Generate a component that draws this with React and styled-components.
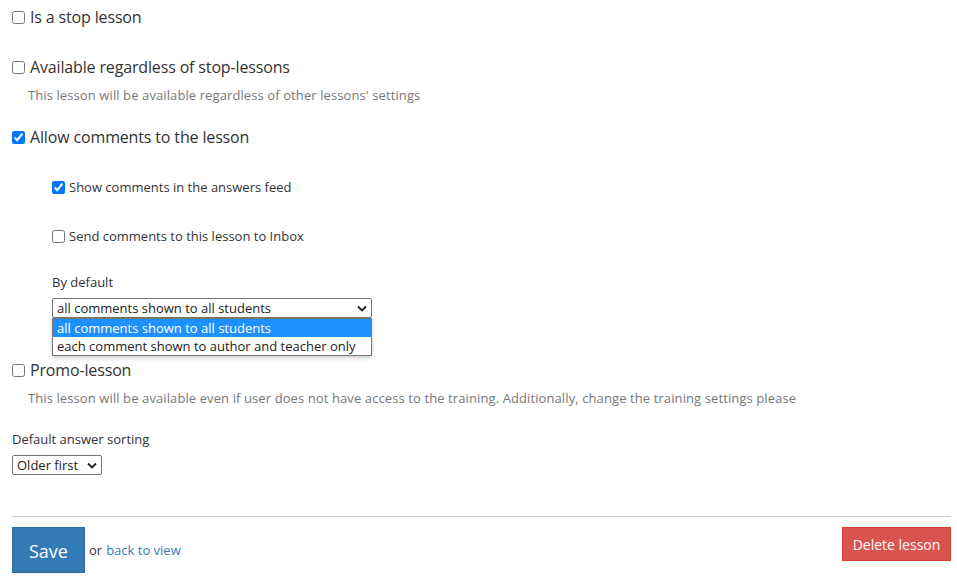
import React, { useState } from "react";
import styled, { createGlobalStyle } from "styled-components";

const Global = createGlobalStyle`
  body {
    margin: 0;
    background: #fff;
    font-family: "Open Sans", "Liberation Sans", Arial, sans-serif;
    color: #333;
  }
`

const Page = styled.form`
  padding: 0 6px 0 12px;
  width: 957px;
  box-sizing: border-box;
`
const Field = styled.div`
  padding-top: ${(p) => p.top || 0}px;
  padding-left: ${(p) => p.indent || 0}px;
`
const Check = styled.label`
  display: flex;
  align-items: center;
  font-size: ${(p) => (p.small ? "13px" : "16px")};
  color: #333;
  line-height: ${(p) => (p.small ? "18px" : "22px")};
  letter-spacing: ${(p) => (p.small ? "0" : "-0.15px")};
  input {
    width: 13px;
    height: 13px;
    margin: 0 ${(p) => (p.small ? "4px" : "5px")} 0 0;
    accent-color: #0075ff;
  }
`
const Hint = styled.div`
  font-size: 13px;
  color: #777;
  padding: 8px 0 0 16px;
  line-height: 18px;
  letter-spacing: 0.1px;
`
const Label = styled.div`
  font-size: 13px;
  color: #333;
  line-height: 18px;
  margin-bottom: 7px;
`
const SelectWrap = styled.div`
  position: relative;
  width: ${(p) => p.w}px;
`
const FakeSelect = styled.div`
  box-sizing: border-box;
  height: 20px;
  border: 1px solid #767676;
  border-radius: 2px;
  font-size: 13px;
  line-height: 18px;
  padding: 0 4px;
  display: flex;
  align-items: center;
  justify-content: space-between;
  color: #222;
  background: #fff;
  svg { flex: none; }
`
const DropList = styled.ul`
  position: absolute;
  left: 0;
  top: 20px;
  width: 100%;
  box-sizing: border-box;
  margin: 0;
  padding: 0;
  list-style: none;
  border: 1px solid #767676;
  background: #fff;
  box-shadow: 0 2px 4px rgba(0,0,0,.2);
  z-index: 5;
`
const Option = styled.li`
  font-size: 13px;
  line-height: 18px;
  padding: 0 4px;
  color: ${(p) => (p.active ? "#fff" : "#222")};
  background: ${(p) => (p.active ? "#1e90ff" : "#fff")};
`
const Rule = styled.hr`
  border: 0;
  border-top: 1px solid #ccc;
  margin: 41px 0 10px;
`
const Footer = styled.div`
  display: flex;
  justify-content: space-between;
  align-items: flex-start;
`
const Left = styled.div`
  display: flex;
  align-items: center;
  font-size: 13px;
  color: #333;
`
const SaveBtn = styled.button`
  background: #337ab7;
  border: 1px solid #2e6da4;
  color: #fff;
  font-family: inherit;
  font-size: 18px;
  width: 73px;
  height: 46px;
  margin-right: 4px;
  padding: 2px 0 0;
`
const Link = styled.a`
  color: #337ab7;
  text-decoration: none;
  margin-left: 4px;
`
const DeleteBtn = styled.button`
  background: #d9534f;
  border: 1px solid #d43f3a;
  color: #fff;
  font-family: inherit;
  font-size: 14px;
  width: 109px;
  height: 34px;
  padding: 0;
`

const Chevron = () => (
  <svg width="10" height="7" viewBox="0 0 10 7">
    <path d="M1 1.5l4 4 4-4" fill="none" stroke="#222" strokeWidth="1.8" />
  </svg>
)

export default function App() {
  const [opts] = useState([
    "all comments shown to all students",
    "each comment shown to author and teacher only",
  ]);
  return (
    <>
      <Global />
      <Page>
        <Field top={6}>
          <Check><input type="checkbox" />Is a stop lesson</Check>
        </Field>
        <Field top={28}>
          <Check><input type="checkbox" />Available regardless of stop-lessons</Check>
          <Hint>This lesson will be available regardless of other lessons' settings</Hint>
        </Field>
        <Field top={22}>
          <Check><input type="checkbox" defaultChecked />Allow comments to the lesson</Check>
        </Field>
        <Field top={30} indent={40}>
          <Check small><input type="checkbox" defaultChecked />Show comments in the answers feed</Check>
        </Field>
        <Field top={31} indent={40}>
          <Check small><input type="checkbox" />Send comments to this lesson to Inbox</Check>
        </Field>
        <Field top={28} indent={40}>
          <Label>By default</Label>
          <SelectWrap w={320}>
            <FakeSelect>{opts[0]}<Chevron /></FakeSelect>
            <DropList>
              {opts.map((o, i) => (
                <Option key={o} active={i === 0}>{o}</Option>
              ))}
            </DropList>
          </SelectWrap>
        </Field>
        <Field top={41}>
          <Check><input type="checkbox" />Promo-lesson</Check>
          <Hint>This lesson will be available even if user does not have access to the training. Additionally, change the training settings please</Hint>
        </Field>
        <Field top={23}>
          <Label>Default answer sorting</Label>
          <SelectWrap w={90}>
            <FakeSelect>Older first<Chevron /></FakeSelect>
          </SelectWrap>
        </Field>
        <Rule />
        <Footer>
          <Left>
            <SaveBtn type="button">Save</SaveBtn>
            or<Link href="#">back to view</Link>
          </Left>
          <DeleteBtn type="button">Delete lesson</DeleteBtn>
        </Footer>
      </Page>
    </>
  );
}
